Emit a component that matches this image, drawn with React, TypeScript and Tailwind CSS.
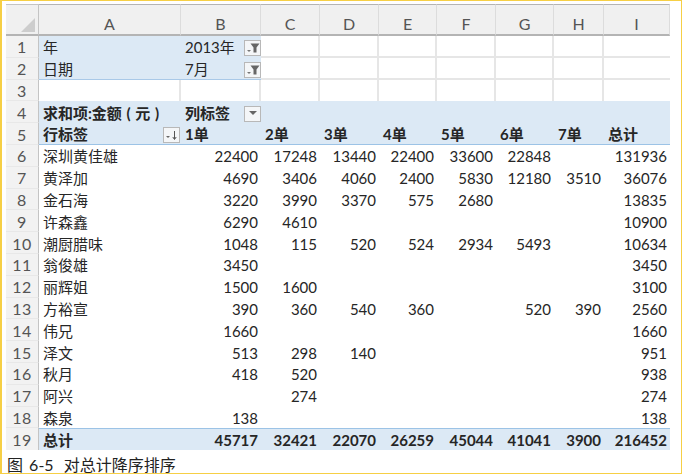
const FONT = "[font-family:Lato,'Noto_Sans_CJK_SC',sans-serif]";

const COLUMNS = ["A", "B", "C", "D", "E", "F", "G", "H", "I"];

const HEADS = ["1单", "2单", "3单", "4单", "5单", "6单", "7单", "总计"];

const ROWS: [string, ...string[]][] = [
	["深圳黄佳雄", "22400", "17248", "13440", "22400", "33600", "22848", "", "131936"],
	["黄泽加", "4690", "3406", "4060", "2400", "5830", "12180", "3510", "36076"],
	["金石海", "3220", "3990", "3370", "575", "2680", "", "", "13835"],
	["许森鑫", "6290", "4610", "", "", "", "", "", "10900"],
	["潮厨腊味", "1048", "115", "520", "524", "2934", "5493", "", "10634"],
	["翁俊雄", "3450", "", "", "", "", "", "", "3450"],
	["丽辉姐", "1500", "1600", "", "", "", "", "", "3100"],
	["方裕宣", "390", "360", "540", "360", "", "520", "390", "2560"],
	["伟兄", "1660", "", "", "", "", "", "", "1660"],
	["泽文", "513", "298", "140", "", "", "", "", "951"],
	["秋月", "418", "520", "", "", "", "", "", "938"],
	["阿兴", "", "274", "", "", "", "", "", "274"],
	["森泉", "138", "", "", "", "", "", "", "138"],
];

const TOTALS = ["45717", "32421", "22070", "26259", "45044", "41041", "3900", "216452"];

function RowNumber({ n, last }: { n: number; last?: boolean }) {
	return (
		<div
			className={`flex items-center justify-center border-r border-[#c4c4c4] bg-[#f2f2f2] pt-[2px] text-[16px] tracking-[0.5px] text-[#555] ${last ? "" : "border-b border-b-[#e8e8e8]"}`}
		>
			{n}
		</div>
	);
}

function FilterButton() {
	return (
		<span className="mt-px flex h-[16px] w-[17px] items-center justify-center border border-[#b8b8b8] bg-[#f4f6f8]">
			<svg aria-hidden="true" height="12" viewBox="0 0 14 12" width="14">
				<path d="M4.5 1.5h9L10.5 5.5v5h-3v-5z" fill="#666" />
				<path d="M1 8h4L3 10z" fill="#777" />
			</svg>
		</span>
	);
}

function DropdownButton() {
	return (
		<span className="mt-px flex h-[16px] w-[17px] items-center justify-center border border-[#b8b8b8] bg-[#f4f6f8]">
			<svg aria-hidden="true" height="5" viewBox="0 0 8 5" width="8">
				<path d="M0 0h8L4 4z" fill="#666" />
			</svg>
		</span>
	);
}

function SortButton() {
	return (
		<span className="mt-px flex h-[16px] w-[17px] items-center justify-center border border-[#b8b8b8] bg-[#f4f6f8]">
			<svg aria-hidden="true" height="11" viewBox="0 0 13 11" width="13">
				<path d="M1 6h4L3 8z" fill="#666" />
				<path d="M9.5 1v8M7.8 7l1.7 2.5L11.2 7" fill="none" stroke="#555" strokeWidth="1" />
			</svg>
		</span>
	);
}

function EmptyCell({ bottom = true, right = true }: { bottom?: boolean; right?: boolean }) {
	return (
		<div
			className={`${bottom ? "border-b-2 border-[#e6e6e6]" : ""} ${right ? "border-r-2 border-r-[#e6e6e6]" : ""}`}
		/>
	);
}

export default function App() {
	return (
		<div
			className={`h-[474px] w-[682px] overflow-hidden border border-l-2 border-[#f6cf45] bg-white pl-[4px] pt-[3px] text-[15px] leading-none text-[#262626] ${FONT}`}
		>
			<div className="grid w-[664px] grid-cols-[33px_142px_80px_59px_59px_58px_59px_58px_50px_66px] grid-rows-[32px_repeat(19,21.8px)]">
				{/* column headers */}
				<div className="flex items-end justify-end border-t border-b-2 border-r border-[#c4c4c4] border-b-[#b4b4b4] bg-[#f0f0f0] pb-[2px] pr-[3px]">
					<div className="h-0 w-0 border-b-[14px] border-l-[14px] border-b-[#cdcdcd] border-l-transparent" />
				</div>
				{COLUMNS.map((c) => (
					<div
						className="flex items-center justify-center border-t border-b-2 border-r border-[#b4b4b4] border-r-[#dcdcdc] bg-[#f0f0f0] pt-[8px] text-[16px] text-[#555] last:border-r-0"
						key={c}
					>
						{c}
					</div>
				))}

				{/* page filters */}
				<RowNumber n={1} />
				<div className="flex items-center bg-[#dce9f5] pl-1 pt-[2px]">年</div>
				<div className="flex items-center justify-between bg-[#dce9f5] pl-1 pt-[2px]">
					2013年
					<FilterButton />
				</div>
				{COLUMNS.slice(2).map((c, i) => (
					<EmptyCell key={c} right={i < 6} />
				))}

				<RowNumber n={2} />
				<div className="flex items-center border-b border-[#a9c9e8] bg-[#dce9f5] pl-1 pt-[2px]">日期</div>
				<div className="flex items-center justify-between border-b border-[#a9c9e8] bg-[#dce9f5] pl-1 pt-[2px]">
					7月
					<FilterButton />
				</div>
				{COLUMNS.slice(2).map((c, i) => (
					<EmptyCell key={c} right={i < 6} />
				))}

				<RowNumber n={3} />
				<EmptyCell bottom={false} />
				<EmptyCell bottom={false} />
				{COLUMNS.slice(2).map((c, i) => (
					<EmptyCell bottom={false} key={c} right={i < 6} />
				))}

				{/* pivot header */}
				<RowNumber n={4} />
				<div className="flex items-center whitespace-pre bg-[#dce9f5] pl-1 pt-[2px] font-bold [word-spacing:1px]">求和项:金额 ( 元 )</div>
				<div className="flex items-center justify-between bg-[#dce9f5] pl-1 pt-[2px] font-bold">
					列标签
					<DropdownButton />
				</div>
				<div className="col-span-7 bg-[#dce9f5]" />

				<RowNumber n={5} />
				<div className="flex items-center justify-between border-b border-[#9cc3e6] bg-[#dce9f5] pl-1 pr-px pt-[2px] font-bold">
					行标签
					<SortButton />
				</div>
				{HEADS.map((h) => (
					<div
						className="flex items-center border-b border-[#9cc3e6] bg-[#dce9f5] pl-1 pt-[2px] font-bold"
						key={h}
					>
						{h}
					</div>
				))}

				{/* data */}
				{ROWS.map(([name, ...values], r) => (
					<div className="contents" key={name}>
						<RowNumber n={r + 6} />
						<div className="flex items-center pl-1 pt-[2px]">{name}</div>
						{values.map((v, i) => (
							<div className="flex items-center justify-end pr-[3px] pt-[2px]" key={COLUMNS[i + 1]}>
								{v}
							</div>
						))}
					</div>
				))}

				{/* totals */}
				<RowNumber last n={19} />
				<div className="flex items-center border-t border-[#9cc3e6] bg-[#dce9f5] pl-1 pt-[2px] font-bold">总计</div>
				{TOTALS.map((v, i) => (
					<div
						className="flex items-center justify-end border-t border-[#9cc3e6] bg-[#dce9f5] pr-[3px] pt-[2px] font-bold"
						key={COLUMNS[i + 1]}
					>
						{v}
					</div>
				))}
			</div>
			<p className="mt-[7px] pl-px text-[16px] text-[#222]">
				图 <span className="ml-[2px]">6-5</span> <span className="ml-[6px]">对总计降序排序</span>
			</p>
		</div>
	);
}
